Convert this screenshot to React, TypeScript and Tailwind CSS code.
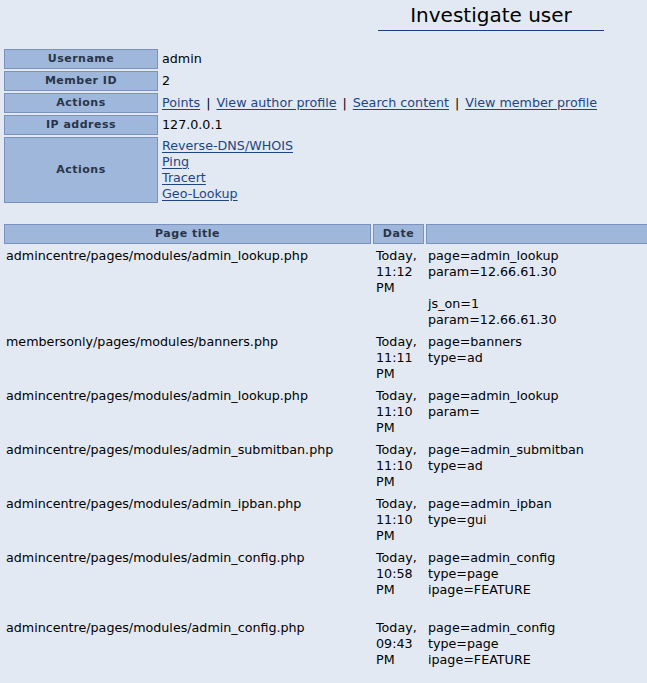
import React from 'react';

const font = { fontFamily: '"DejaVu Sans", sans-serif' };

const rows = [
  { page: 'admincentre/pages/modules/admin_lookup.php', time: '11:12', params: ['page=admin_lookup', 'param=12.66.61.30', '', 'js_on=1', 'param=12.66.61.30'] },
  { page: 'membersonly/pages/modules/banners.php', time: '11:11', params: ['page=banners', 'type=ad'] },
  { page: 'admincentre/pages/modules/admin_lookup.php', time: '11:10', params: ['page=admin_lookup', 'param='] },
  { page: 'admincentre/pages/modules/admin_submitban.php', time: '11:10', params: ['page=admin_submitban', 'type=ad'] },
  { page: 'admincentre/pages/modules/admin_ipban.php', time: '11:10', params: ['page=admin_ipban', 'type=gui'] },
  { page: 'admincentre/pages/modules/admin_config.php', time: '10:58', params: ['page=admin_config', 'type=page', 'ipage=FEATURE', ''] },
  { page: 'admincentre/pages/modules/admin_config.php', time: '09:43', params: ['page=admin_config', 'type=page', 'ipage=FEATURE', ''] },
];

const headCell = 'border border-[#7a92bd] bg-[#a0b7dc] text-center align-middle text-[11px] font-bold leading-[18px] tracking-[0.5px] text-[#283548]';

function Label({ children }: { children: React.ReactNode }) {
  return <th className={`w-[154px] h-[20px] ${headCell}`}>{children}</th>;
}

function Link({ children }: { children: React.ReactNode }) {
  return <a href="#" className="text-[#1d4682] underline underline-offset-[2px]">{children}</a>;
}

function Sep() {
  return <span className="mx-[6px]">|</span>;
}

export default function App() {
  return (
    <div className="min-h-screen overflow-hidden bg-[#e3e9f2] text-[12.7px] leading-4 text-black" style={font}>
      <div className="flex justify-end pr-[43px] pt-[4px]">
        <h1 className="w-[226px] border-b border-[#1c3f7f] pb-[3px] text-center text-[20px] leading-[23px]">
          Investigate user
        </h1>
      </div>

      <table className="ml-[2px] mt-[16px] border-separate border-spacing-[2px]">
        <tbody>
          <tr>
            <Label>Username</Label>
            <td className="px-[2px] align-middle">admin</td>
          </tr>
          <tr>
            <Label>Member ID</Label>
            <td className="px-[2px] align-middle">2</td>
          </tr>
          <tr>
            <Label>Actions</Label>
            <td className="px-[2px] align-middle whitespace-nowrap">
              <Link>Points</Link>
              <Sep />
              <Link>View author profile</Link>
              <Sep />
              <Link>Search content</Link>
              <Sep />
              <Link>View member profile</Link>
            </td>
          </tr>
          <tr>
            <Label>IP address</Label>
            <td className="px-[2px] align-middle">127.0.0.1</td>
          </tr>
          <tr>
            <th className={`w-[154px] ${headCell}`}>Actions</th>
            <td className="px-[2px] py-px align-top">
              <div><Link>Reverse-DNS/WHOIS</Link></div>
              <div><Link>Ping</Link></div>
              <div><Link>Tracert</Link></div>
              <div><Link>Geo-Lookup</Link></div>
            </td>
          </tr>
        </tbody>
      </table>

      <table className="ml-[2px] mt-[17px] w-[720px] table-fixed border-separate border-spacing-[2px]">
        <thead>
          <tr>
            <th className={`w-[367px] h-[20px] ${headCell}`}>Page title</th>
            <th className={`w-[51px] ${headCell}`}>Date</th>
            <th className={headCell}></th>
          </tr>
        </thead>
        <tbody>
          {rows.map((r, i) => (
            <tr key={i}>
              <td className="px-[2px] py-[2px] align-top whitespace-nowrap">{r.page}</td>
              <td className="px-[3px] py-[2px] align-top whitespace-nowrap">
                <div>Today,</div>
                <div>{r.time}</div>
                <div>PM</div>
              </td>
              <td className="px-[2px] py-[2px] align-top">
                {r.params.map((p, j) => (
                  <div key={j} className="h-4">{p}</div>
                ))}
              </td>
            </tr>
          ))}
        </tbody>
      </table>
    </div>
  );
}
